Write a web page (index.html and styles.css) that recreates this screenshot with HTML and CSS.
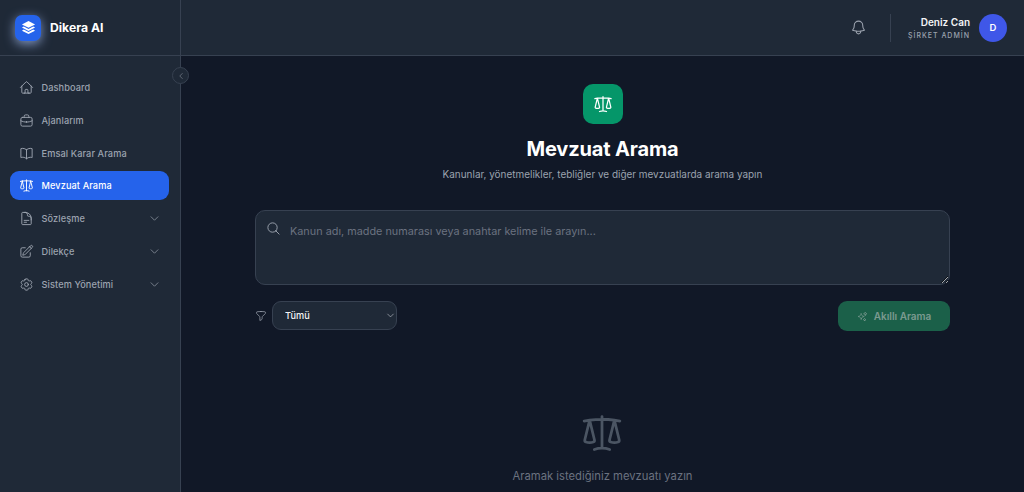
FILE: index.html
```html
<!DOCTYPE html>
<html lang="tr">
<head>
  <meta charset="UTF-8">
  <meta name="viewport" content="width=device-width, initial-scale=1.0">
  <title>Dikera AI - Mevzuat Arama</title>
  <link rel="stylesheet" href="styles.css">
</head>
<body>

  <!-- Icon sprite -->
  <svg class="sprite" aria-hidden="true">
    <symbol id="i-home" viewBox="0 0 24 24"><path d="m2.25 12 8.954-8.955c.44-.439 1.152-.439 1.591 0L21.750 12M4.500 9.750v10.125c0 .621.504 1.125 1.125 1.125H9.750v-4.875c0-.621.504-1.125 1.125-1.125h2.250c.621 0 1.125.504 1.125 1.125V21h4.125c.621 0 1.125-.504 1.125-1.125V9.750M8.250 21h8.250"/></symbol>
    <symbol id="i-briefcase" viewBox="0 0 24 24"><rect x="3" y="7" width="18" height="14" rx="2.500"/><path d="M8.250 7V5.250A2.250 2.250 0 0 1 10.500 3h3a2.250 2.250 0 0 1 2.250 2.250V7M3 12.500c2.800 1.300 5.800 2 9 2s6.200-.7 9-2M12 13.500v1.500"/></symbol>
    <symbol id="i-book" viewBox="0 0 24 24"><path d="M12 6.042A8.967 8.967 0 0 0 6 3.750c-1.052 0-2.062.18-3 .512v14.250A8.987 8.987 0 0 1 6 18c2.305 0 4.408.867 6 2.292m0-14.250a8.966 8.966 0 0 1 6-2.292c1.052 0 2.062.18 3 .512v14.250A8.987 8.987 0 0 0 18 18a8.967 8.967 0 0 0-6 2.292m0-14.250v14.250"/></symbol>
    <symbol id="i-scale" viewBox="0 0 24 24"><path d="M12 3v17.250m0 0c-1.472 0-2.882.265-4.185.75M12 20.250c1.472 0 2.882.265 4.185.75M18.750 4.970A48.416 48.416 0 0 0 12 4.500c-2.291 0-4.545.16-6.750.47m13.500 0c1.010.143 2.010.317 3 .52m-3-.52 2.620 10.726c.122.499-.106 1.028-.589 1.202a5.988 5.988 0 0 1-2.031.352 5.988 5.988 0 0 1-2.031-.352c-.483-.174-.711-.703-.59-1.202L18.750 4.971Zm-16.500.52c.99-.203 1.990-.377 3-.52m0 0 2.620 10.726c.122.499-.106 1.028-.589 1.202a5.989 5.989 0 0 1-2.031.352 5.989 5.989 0 0 1-2.031-.352c-.483-.174-.711-.703-.59-1.202L5.250 4.971Z"/></symbol>
    <symbol id="i-doc" viewBox="0 0 24 24"><path d="M19.500 14.250v-2.625a3.375 3.375 0 0 0-3.375-3.375h-1.500A1.125 1.125 0 0 1 13.500 7.125v-1.500a3.375 3.375 0 0 0-3.375-3.375H8.250m0 12.750h7.500m-7.500 3H12M10.500 2.250H5.625c-.621 0-1.125.504-1.125 1.125v17.250c0 .621.504 1.125 1.125 1.125h12.750c.621 0 1.125-.504 1.125-1.125V11.250a9 9 0 0 0-9-9Z"/></symbol>
    <symbol id="i-pencil" viewBox="0 0 24 24"><path d="m16.862 4.487 1.687-1.688a1.875 1.875 0 1 1 2.652 2.652L10.582 16.070a4.500 4.500 0 0 1-1.897 1.130L6 18l.8-2.685a4.500 4.500 0 0 1 1.130-1.897l8.932-8.931Zm0 0L19.500 7.125M18 14v4.750A2.250 2.250 0 0 1 15.750 21H5.250A2.250 2.250 0 0 1 3 18.750V8.250A2.250 2.250 0 0 1 5.250 6H10"/></symbol>
    <symbol id="i-cog" viewBox="0 0 24 24"><path d="M9.594 3.940c.09-.542.56-.94 1.110-.94h2.593c.55 0 1.020.398 1.110.94l.213 1.281c.063.374.313.686.645.87.074.04.147.083.22.127.325.196.72.257 1.075.124l1.217-.456a1.125 1.125 0 0 1 1.370.49l1.296 2.247a1.125 1.125 0 0 1-.26 1.431l-1.003.827c-.293.241-.438.613-.43.992a7.723 7.723 0 0 1 0 .255c-.008.378.137.75.43.991l1.004.827c.424.35.534.955.26 1.430l-1.298 2.247a1.125 1.125 0 0 1-1.369.491l-1.217-.456c-.355-.133-.75-.072-1.076.124a6.470 6.470 0 0 1-.22.128c-.331.183-.581.495-.644.869l-.213 1.281c-.09.543-.56.94-1.110.94h-2.594c-.55 0-1.019-.398-1.110-.94l-.213-1.281c-.062-.374-.312-.686-.644-.87a6.520 6.520 0 0 1-.22-.127c-.325-.196-.72-.257-1.076-.124l-1.217.456a1.125 1.125 0 0 1-1.369-.49l-1.297-2.247a1.125 1.125 0 0 1 .26-1.431l1.004-.827c.292-.24.437-.613.43-.991a6.932 6.932 0 0 1 0-.255c.007-.38-.138-.751-.43-.992l-1.004-.827a1.125 1.125 0 0 1-.26-1.430l1.297-2.247a1.125 1.125 0 0 1 1.370-.491l1.216.456c.356.133.751.072 1.076-.124.072-.044.146-.086.22-.128.332-.183.582-.495.644-.869l.214-1.280Z"/><path d="M15 12a3 3 0 1 1-6 0 3 3 0 0 1 6 0Z"/></symbol>
    <symbol id="i-chevron" viewBox="0 0 24 24"><path d="m19.500 8.250-7.500 7.500-7.500-7.500"/></symbol>
    <symbol id="i-back" viewBox="0 0 24 24"><path d="M15.750 19.500 8.250 12l7.500-7.500"/></symbol>
    <symbol id="i-bell" viewBox="0 0 24 24"><path d="M14.857 17.082a23.848 23.848 0 0 0 5.454-1.310A8.967 8.967 0 0 1 18 9.750V9A6 6 0 0 0 6 9v.75a8.967 8.967 0 0 1-2.312 6.022c1.733.64 3.560 1.085 5.455 1.310m5.714 0a24.255 24.255 0 0 1-5.714 0m5.714 0a3 3 0 1 1-5.714 0"/></symbol>
    <symbol id="i-search" viewBox="0 0 24 24"><path d="m21 21-5.197-5.197m0 0A7.500 7.500 0 1 0 5.196 5.196a7.500 7.500 0 0 0 10.607 10.607Z"/></symbol>
    <symbol id="i-funnel" viewBox="0 0 24 24"><path d="M12 3c2.755 0 5.455.232 8.083.678.533.09.917.556.917 1.096v1.044a2.250 2.250 0 0 1-.659 1.591l-5.432 5.432a2.250 2.250 0 0 0-.659 1.591v2.927a2.250 2.250 0 0 1-1.244 2.013L9.750 21v-6.568a2.250 2.250 0 0 0-.659-1.591L3.659 7.409A2.250 2.250 0 0 1 3 5.818V4.774c0-.54.384-1.006.917-1.096A48.320 48.320 0 0 1 12 3Z"/></symbol>
    <symbol id="i-sparkles" viewBox="0 0 24 24"><path d="M9.813 15.904 9 18.750l-.813-2.846a4.500 4.500 0 0 0-3.090-3.090L2.250 12l2.846-.813a4.500 4.500 0 0 0 3.090-3.090L9 5.250l.813 2.846a4.500 4.500 0 0 0 3.090 3.090L15.750 12l-2.846.813a4.500 4.500 0 0 0-3.090 3.090ZM18.259 8.715 18 9.750l-.259-1.035a3.375 3.375 0 0 0-2.455-2.456L14.250 6l1.036-.259a3.375 3.375 0 0 0 2.455-2.456L18 2.250l.259 1.035a3.375 3.375 0 0 0 2.456 2.456L21.750 6l-1.035.259a3.375 3.375 0 0 0-2.456 2.456ZM16.894 20.567 16.500 21.750l-.394-1.183a2.250 2.250 0 0 0-1.423-1.423L13.500 18.750l1.183-.394a2.250 2.250 0 0 0 1.423-1.423l.394-1.183.394 1.183a2.250 2.250 0 0 0 1.423 1.423l1.183.394-1.183.394a2.250 2.250 0 0 0-1.423 1.423Z"/></symbol>
  </svg>

  <!-- Sidebar -->
  <aside class="sidebar">
    <div class="brand">
      <span class="brand-logo">
        <svg viewBox="0 0 24 24"><path d="M12 1.500 22.500 7 12 12.500 1.500 7Z"/><path d="M4.500 10.300 12 14.200l7.500-3.900 3 1.700L12 17.500 1.500 12Z"/><path d="M4.500 15.300 12 19.200l7.500-3.900 3 1.700L12 22.500 1.500 17Z"/></svg>
      </span>
      <span class="brand-name">Dikera AI</span>
    </div>

    <button class="collapse-btn" aria-label="Daralt"><svg class="icon"><use href="#i-back"/></svg></button>

    <nav class="nav">
      <a class="nav-item" href="#"><svg class="icon"><use href="#i-home"/></svg>Dashboard</a>
      <a class="nav-item" href="#"><svg class="icon"><use href="#i-briefcase"/></svg>Ajanlarım</a>
      <a class="nav-item" href="#"><svg class="icon"><use href="#i-book"/></svg>Emsal Karar Arama</a>
      <a class="nav-item active" href="#"><svg class="icon"><use href="#i-scale"/></svg>Mevzuat Arama</a>
      <a class="nav-item" href="#"><svg class="icon"><use href="#i-doc"/></svg>Sözleşme<svg class="chevron"><use href="#i-chevron"/></svg></a>
      <a class="nav-item" href="#"><svg class="icon"><use href="#i-pencil"/></svg>Dilekçe<svg class="chevron"><use href="#i-chevron"/></svg></a>
      <a class="nav-item" href="#"><svg class="icon"><use href="#i-cog"/></svg>Sistem Yönetimi<svg class="chevron"><use href="#i-chevron"/></svg></a>
    </nav>
  </aside>

  <div class="page">
    <!-- Top bar -->
    <header class="topbar">
      <svg class="bell"><use href="#i-bell"/></svg>
      <div class="user">
        <div class="user-text">
          <div class="user-name">Deniz Can</div>
          <div class="user-role">ŞİRKET ADMİN</div>
        </div>
        <div class="avatar">D</div>
      </div>
    </header>

    <!-- Content -->
    <main class="main">
      <div class="hero-icon"><svg><use href="#i-scale"/></svg></div>
      <h1>Mevzuat Arama</h1>
      <p class="subtitle">Kanunlar, yönetmelikler, tebliğler ve diğer mevzuatlarda arama yapın</p>

      <div class="search-box">
        <svg class="search-icon"><use href="#i-search"/></svg>
        <textarea placeholder="Kanun adı, madde numarası veya anahtar kelime ile arayın..."></textarea>
      </div>

      <div class="controls">
        <div class="filter">
          <svg class="funnel"><use href="#i-funnel"/></svg>
          <div class="select-wrap">
            <select>
              <option>Tümü</option>
              <option>Kanun</option>
              <option>Yönetmelik</option>
              <option>Tebliğ</option>
            </select>
            <svg class="select-arrow"><use href="#i-chevron"/></svg>
          </div>
        </div>
        <button class="smart-btn" disabled><svg><use href="#i-sparkles"/></svg>Akıllı Arama</button>
      </div>

      <div class="empty">
        <svg><use href="#i-scale"/></svg>
        <p>Aramak istediğiniz mevzuatı yazın</p>
      </div>
    </main>
  </div>

</body>
</html>
```

FILE: styles.css
```css
/* Base */
* {
  box-sizing: border-box;
}

body {
  margin: 0;
  height: 100vh;
  overflow: hidden;
  display: flex;
  font-family: Inter, "Noto Sans", sans-serif;
  background-color: #111827;
  color: #f3f4f6;
}

svg use {
  fill: none;
  stroke: currentColor;
  stroke-width: 1.5;
  stroke-linecap: round;
  stroke-linejoin: round;
}

.sprite {
  display: none;
}

/* Sidebar */
.sidebar {
  position: relative;
  width: 181px;
  flex-shrink: 0;
  background-color: #1f2937;
  border-right: 1px solid #374151;
}

.brand {
  height: 56px;
  padding: 0 15px;
  display: flex;
  align-items: center;
  gap: 9px;
  border-bottom: 1px solid #374151;
}

.brand-logo {
  width: 26px;
  height: 26px;
  border-radius: 7px;
  background-color: #2563eb;
  box-shadow: 0 3px 11px rgba(170, 195, 250, 0.7);
  display: flex;
  align-items: center;
  justify-content: center;
}

.brand-logo svg {
  width: 15px;
  height: 15px;
  fill: #fff;
}

.brand-name {
  font-size: 12.2px;
  font-weight: 700;
  color: #fff;
}

.collapse-btn {
  position: absolute;
  top: 67px;
  right: -9px;
  width: 17px;
  height: 17px;
  padding: 0;
  border: 1px solid #374151;
  border-radius: 50%;
  background-color: #1f2937;
  color: #9ca3af;
  display: flex;
  align-items: center;
  justify-content: center;
}

.collapse-btn .icon {
  width: 8px;
  height: 8px;
}

.nav {
  padding: 17px 11px 0 10px;
  display: flex;
  flex-direction: column;
  gap: 3.8px;
}

.nav-item {
  height: 29px;
  padding: 0 9px 0 8.5px;
  display: flex;
  align-items: center;
  gap: 8px;
  border-radius: 9px;
  font-size: 9.2px;
  font-weight: 500;
  letter-spacing: 0.1px;
  color: #9ca3af;
  text-decoration: none;
}

.nav-item.active {
  background-color: #2563eb;
  color: #fff;
}

.icon {
  width: 15px;
  height: 15px;
  flex-shrink: 0;
}

.chevron {
  width: 11px;
  height: 11px;
  margin-left: auto;
}

/* Top bar */
.page {
  flex: 1;
  min-width: 0;
  display: flex;
  flex-direction: column;
}

.topbar {
  height: 56px;
  flex-shrink: 0;
  padding: 0 17px 0 0;
  background-color: #1f2937;
  border-bottom: 1px solid #374151;
  display: flex;
  align-items: center;
  justify-content: flex-end;
}

.bell {
  width: 17px;
  height: 17px;
  color: #9ca3af;
}

.user {
  margin-left: 23px;
  padding-left: 17px;
  border-left: 1px solid #374151;
  height: 28px;
  display: flex;
  align-items: center;
  gap: 9px;
}

.user-text {
  text-align: right;
}

.user-name {
  font-size: 10px;
  font-weight: 600;
  color: #f3f4f6;
}

.user-role {
  margin-top: 3px;
  font-size: 7px;
  font-weight: 500;
  letter-spacing: 1px;
  color: #9ca3af;
}

.avatar {
  width: 28px;
  height: 28px;
  border-radius: 50%;
  background-color: #3f57e8;
  color: #fff;
  font-size: 9.5px;
  font-weight: 600;
  display: flex;
  align-items: center;
  justify-content: center;
}

/* Content */
.main {
  flex: 1;
  padding: 28px 74px 0;
  display: flex;
  flex-direction: column;
  align-items: center;
}

.hero-icon {
  width: 40px;
  height: 40px;
  border-radius: 10px;
  background-color: #059669;
  color: #fff;
  display: flex;
  align-items: center;
  justify-content: center;
}

.hero-icon svg {
  width: 20px;
  height: 20px;
}

h1 {
  margin: 11px 0 0;
  font-size: 20px;
  line-height: 28px;
  font-weight: 700;
  letter-spacing: -0.15px;
  color: #fff;
}

.subtitle {
  margin: 4px 0 0;
  font-size: 9.95px;
  line-height: 14px;
  color: #9ca3af;
}

.search-box {
  position: relative;
  width: 100%;
  margin-top: 29px;
}

.search-icon {
  position: absolute;
  top: 11px;
  left: 11px;
  width: 15px;
  height: 15px;
  color: #9ca3af;
}

textarea {
  display: block;
  width: 100%;
  height: 75px;
  padding: 13px 12px 12px 34px;
  border: 1px solid #374151;
  border-radius: 10px;
  background-color: #1f2937;
  color: #f3f4f6;
  font-family: inherit;
  font-size: 10.85px;
  line-height: 14px;
  outline: none;
  resize: vertical;
}

textarea::placeholder {
  color: #6b7280;
  opacity: 1;
}

.controls {
  width: 100%;
  margin-top: 16px;
  display: flex;
  align-items: flex-start;
  justify-content: space-between;
}

.filter {
  display: flex;
  align-items: center;
  gap: 5px;
}

.funnel {
  width: 12px;
  height: 12px;
  color: #9ca3af;
}

.select-wrap {
  position: relative;
  display: flex;
}

select {
  width: 125px;
  height: 29px;
  padding: 0 12px;
  border: 1px solid #374151;
  border-radius: 9px;
  background-color: #1f2937;
  color: #f3f4f6;
  font-family: inherit;
  font-size: 9.2px;
  font-weight: 500;
  appearance: none;
}

.select-arrow {
  position: absolute;
  top: 10px;
  right: 2px;
  width: 9px;
  height: 9px;
  color: #d1d5db;
  pointer-events: none;
}

.smart-btn {
  width: 112px;
  height: 30px;
  border: 0;
  border-radius: 9px;
  background-color: #1b6049;
  color: #7b9a90;
  font-family: inherit;
  font-size: 10px;
  font-weight: 600;
  display: flex;
  align-items: center;
  justify-content: center;
  gap: 6px;
}

.smart-btn svg {
  width: 11px;
  height: 11px;
}

.empty {
  margin-top: 80px;
  text-align: center;
  color: #4b5563;
}

.empty svg {
  display: block;
  width: 44px;
  height: 44px;
  margin: 0 auto;
}

.empty p {
  margin: 14px 0 0;
  font-size: 11.25px;
  line-height: 14px;
  color: #6b7280;
}
```
